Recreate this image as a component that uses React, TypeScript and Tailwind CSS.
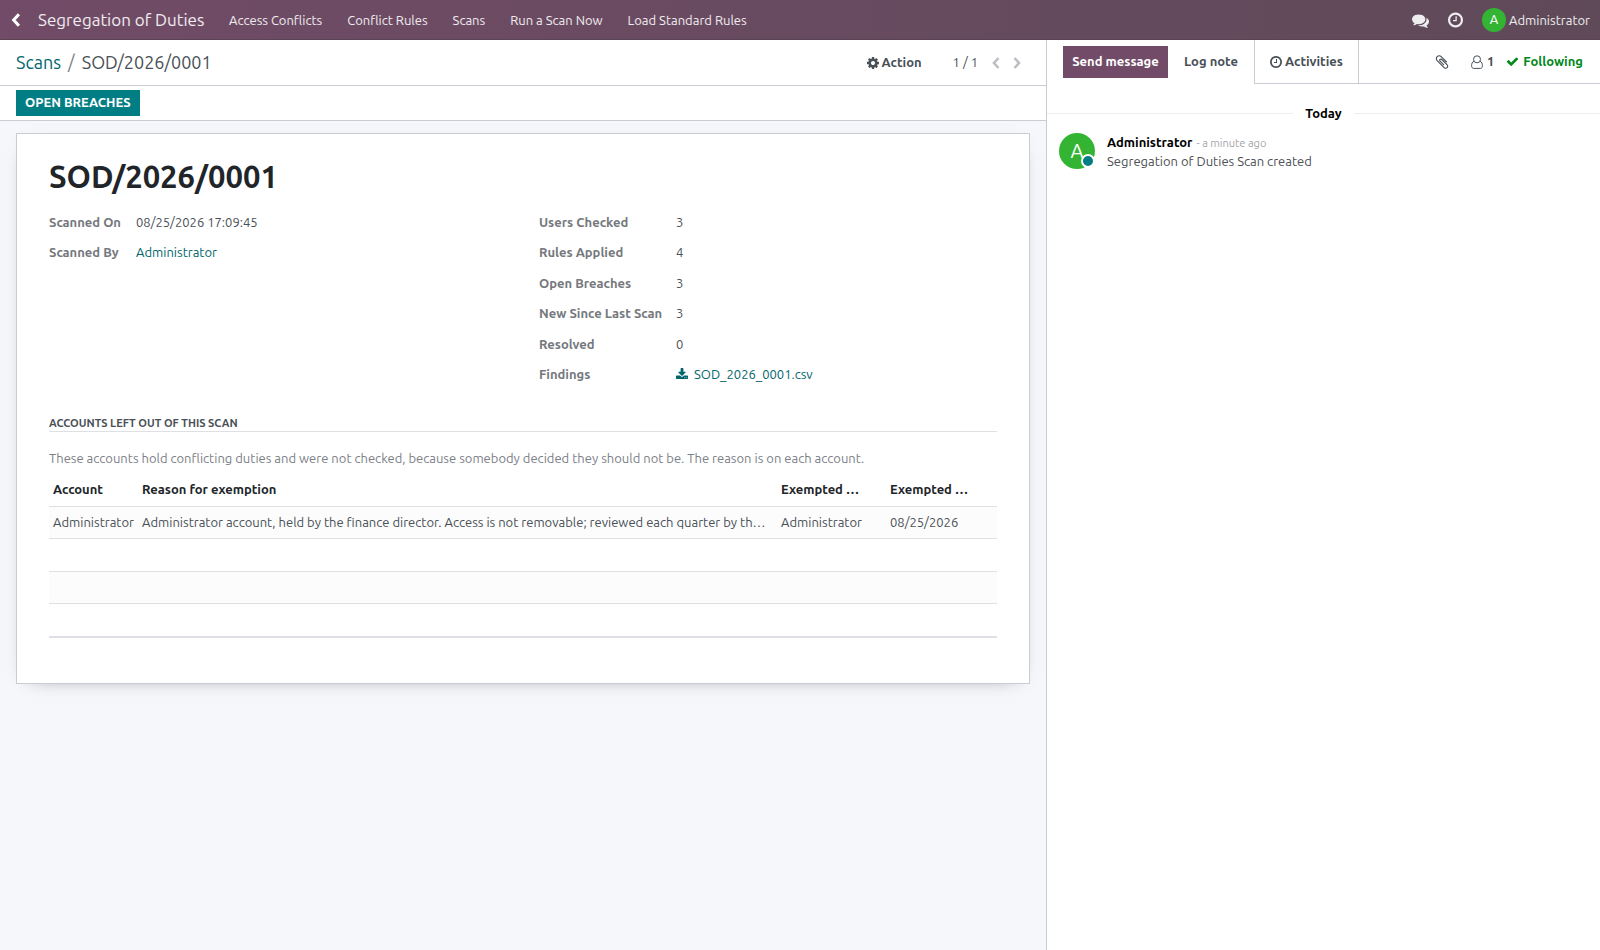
import React from "react";

const FONT = "font-['Ubuntu','Noto_Sans','Open_Sans',sans-serif]";

type IconProps = { d: string; box?: string; className?: string };

function Icon({ d, box = "0 0 1792 1792", className = "" }: IconProps) {
  return (
    <svg viewBox={box} className={`shrink-0 ${className}`} fill="currentColor" aria-hidden="true">
      <path d={d} />
    </svg>
  );
}

const CLOCK =
  "M896 544v448q0 14-9 23t-23 9h-320q-14 0-23-9t-9-23v-64q0-14 9-23t23-9h224v-352q0-14 9-23t23-9h64q14 0 23 9t9 23zm416 352q0-148-73-273t-198-198-273-73-273 73-198 198-73 273 73 273 198 198 273 73 273-73 198-198 73-273zm224 0q0 209-103 385.5t-279.5 279.5-385.5 103-385.5-103-279.5-279.5-103-385.5 103-385.5 279.5-279.5 385.5-103 385.5 103 279.5 279.5 103 385.5z";
const COG =
  "M1024 896q0-106-75-181t-181-75-181 75-75 181 75 181 181 75 181-75 75-181zm512-109v222q0 12-8 23t-20 13l-185 28q-19 54-39 91 35 50 107 138 10 12 10 25t-9 23q-27 37-99 108t-94 71q-12 0-26-9l-138-108q-44 23-91 38-16 136-29 186-7 28-36 28h-222q-14 0-24.5-8.5t-11.5-21.5l-28-184q-49-16-90-37l-141 107q-10 9-25 9-14 0-25-11-126-114-165-168-7-10-7-23 0-12 8-23 15-21 51-66.5t54-70.5q-27-50-41-99l-183-27q-13-2-21-12.5t-8-23.5v-222q0-12 8-23t19-13l186-28q14-46 39-92-40-57-107-138-10-12-10-24 0-10 9-23 26-36 98.5-107.5t94.5-71.5q13 0 26 10l138 107q44-23 91-38 16-136 29-186 7-28 36-28h222q14 0 24.5 8.5t11.5 21.5l28 184q49 16 90 37l142-107q9-9 24-9 13 0 25 10 129 119 165 170 7 8 7 22 0 12-8 23-15 21-51 66.5t-54 70.5q26 50 41 98l183 28q13 2 21 12.5t8 23.5z";
const DOWNLOAD =
  "M1280 1344q0-26-19-45t-45-19-45 19-19 45 19 45 45 19 45-19 19-45zm256 0q0-26-19-45t-45-19-45 19-19 45 19 45 45 19 45-19 19-45zm128-224v320q0 40-28 68t-68 28h-1472q-40 0-68-28t-28-68v-320q0-40 28-68t68-28h465l135 136q58 56 136 56t136-56l136-136h464q40 0 68 28t28 68zm-325-569q17 41-14 70l-448 448q-18 19-45 19t-45-19l-448-448q-31-29-14-70 17-39 59-39h256v-448q0-26 19-45t45-19h256q26 0 45 19t19 45v448h256q42 0 59 39z";
const CHECK =
  "M1671 566q0 40-28 68l-724 724-136 136q-28 28-68 28t-68-28l-136-136-362-362q-28-28-28-68t28-68l136-136q28-28 68-28t68 28l294 295 656-657q28-28 68-28t68 28l136 136q28 28 28 68z";
const CLIP =
  "M1596 1385q0 117-79 196t-196 79q-135 0-235-100l-777-776q-113-115-113-271 0-159 110-270t269-111q158 0 273 113l605 606q10 10 10 22 0 16-30.5 46.5t-46.5 30.5q-13 0-23-10l-606-607q-79-77-181-77-106 0-179 75t-73 181q0 105 76 181l776 777q63 63 145 63 64 0 106-42t42-106q0-82-63-145l-581-581q-26-24-60-24-29 0-48 19t-19 48q0 32 25 59l410 410q10 10 10 22 0 16-31 47t-47 31q-12 0-22-10l-410-410q-63-61-63-149 0-82 57-139t139-57q88 0 149 63l581 581q100 98 100 235z";
const COMMENTS =
  "M1408 768q0 139-94 257t-256.5 186.5-353.5 68.5q-86 0-176-16-124 88-278 128-36 9-86 16h-3q-11 0-20.5-8t-11.5-21q-1-3-1-6.5t.5-6.5 2-6l2.5-5 3.5-5.5 4-5 4.5-5 4-4.5q5-6 23-25t26-29.5 22.5-29 25-38.5 20.5-44q-124-72-195-177t-71-224q0-139 94-257t256.5-186.5 353.5-68.5 353.5 68.5 256.5 186.5 94 257zm384 256q0 120-71 224.5t-195 176.5q10 24 20.5 44t25 38.5 22.5 29 26 29.5 23 25q1 1 4 4.5t4.5 5 4 5 3.5 5.5l2.5 5 2 6 .5 6.5-1 6.5q-3 14-13 22t-22 7q-50-7-86-16-154-40-278-128-90 16-176 16-271 0-472-132 58 4 88 4 161 0 309-45t264-129q125-92 192-212t67-254q0-77-23-152 129 71 204 178t75 230z";

function Chevron({ points, className }: { points: string; className: string }) {
  return (
    <svg viewBox="0 0 8 12" className={`shrink-0 ${className}`} fill="none" stroke="currentColor" strokeWidth="2.6" aria-hidden="true">
      <polyline points={points} />
    </svg>
  );
}

function UserOutline() {
  return (
    <svg viewBox="0 0 12 14" className="h-3.5 w-3 shrink-0" fill="none" stroke="currentColor" strokeWidth="1" aria-hidden="true">
      <circle cx="6" cy="4.3" r="3.5" />
      <path d="M3 6.300C1.200 6.900.6 8.600.6 10.800c0 1.500.8 2.600 2 2.600h6.800c1.200 0 2-1.100 2-2.600 0-2.200-.6-3.900-2.400-4.500" />
    </svg>
  );
}

const menu = ["Access Conflicts", "Conflict Rules", "Scans", "Run a Scan Now", "Load Standard Rules"];

function NavBar() {
  return (
    <header className="flex h-10 items-center bg-linear-to-r from-[#714b67] to-[#5f4a59] text-[13px] text-white/90 inset-shadow-[0_-1px_0_#5a4352]">
      <button type="button" aria-label="Back" className="flex h-full w-[38px] items-center pl-[11px] text-white">
        <Chevron points="6.500,1 2,6 6.500,11" className="h-3.5 w-2.5" />
      </button>
      <a href="#home" className="w-[179px] text-[17px]">Segregation of Duties</a>
      <nav className="flex h-full items-center gap-px pt-0.5">
        {menu.map((m) => (
          <a key={m} href="#menu" className="px-3">{m}</a>
        ))}
      </nav>
      <div className="ml-auto flex items-center pr-2.5">
        <button type="button" aria-label="Messages" className="mr-[19px]"><Icon d={COMMENTS} className="size-[17px]" /></button>
        <button type="button" aria-label="Activities" className="mr-[19px]"><Icon d={CLOCK} box="0 0 1536 1792" className="h-[18px] w-[15px]" /></button>
        <button type="button" className="flex items-center gap-[3px]">
          <span className="flex size-6 items-center justify-center rounded-full bg-[#33b533] text-[13px] text-white">A</span>
          <span className="pt-0.5">Administrator</span>
        </button>
      </div>
    </header>
  );
}

function ControlPanel() {
  return (
    <div className="flex h-[46px] items-center border-b border-[#c9ccd2] pl-4 pr-[19px]">
      <div className="flex gap-[7px] text-[18px]">
        <a href="#scans" className="text-[#01666b]">Scans</a>
        <span className="text-[#777d85]">/</span>
        <span>SOD/2026/0001</span>
      </div>
      <button type="button" className="ml-auto flex items-center gap-[3px] font-semibold">
        <Icon d={COG} box="0 0 1536 1792" className="h-3.5 w-3" />
        Action
      </button>
      <span className="ml-[31px] mr-[7px]">1 / 1</span>
      <button type="button" aria-label="Previous" className="flex w-[21px] justify-center text-[#bcbec4]">
        <Chevron points="6.500,1 2,6 6.500,11" className="h-3 w-2" />
      </button>
      <button type="button" aria-label="Next" className="flex w-[21px] justify-center text-[#bcbec4]">
        <Chevron points="1.500,1 6,6 1.500,11" className="h-3 w-2" />
      </button>
    </div>
  );
}

const counts = [
  ["Users Checked", "3"],
  ["Rules Applied", "4"],
  ["Open Breaches", "3"],
  ["New Since Last Scan", "3"],
  ["Resolved", "0"],
];

function Sheet() {
  return (
    <div className="mx-4 mt-3 border border-[#c9ccd2] bg-white px-8 pb-[45px] pt-[19px] shadow-[0_5px_20px_-15px_rgb(0_0_0/0.65)]">
      <h1 className="text-[31px] font-semibold leading-[48px] text-[#212529]">SOD/2026/0001</h1>
      <div className="mt-1.5 grid grid-cols-2 items-start gap-x-8">
        <dl className="grid h-[61px] grid-cols-[87px_1fr] grid-rows-2 items-center">
          <dt className="font-semibold text-[#75787d]">Scanned On</dt>
          <dd>08/25/2026 17:09:45</dd>
          <dt className="font-semibold text-[#75787d]">Scanned By</dt>
          <dd><a href="#user" className="text-[#01666b]">Administrator</a></dd>
        </dl>
        <dl className="grid h-[183px] grid-cols-[137px_1fr] grid-rows-6 items-center">
          {counts.map(([k, v]) => (
            <React.Fragment key={k}>
              <dt className="font-semibold text-[#75787d]">{k}</dt>
              <dd>{v}</dd>
            </React.Fragment>
          ))}
          <dt className="font-semibold text-[#75787d]">Findings</dt>
          <dd>
            <a href="#file" className="flex items-center gap-1.5 text-[#01666b]">
              <Icon d={DOWNLOAD} box="0 0 1664 1792" className="h-[13px] w-3" />
              SOD_2026_0001.csv
            </a>
          </dd>
        </dl>
      </div>
      <h2 className="mt-[25px] border-b border-[#dee0e4] text-[11px] font-bold uppercase leading-[16px]">Accounts left out of this scan</h2>
      <p className="mt-4 leading-5 text-[#7c8087]">
        These accounts hold conflicting duties and were not checked, because somebody decided they should not be. The reason is on each account.
      </p>
      <table className="w-full table-fixed border-collapse border-b-2 border-[#dee0e6] text-left">
        <colgroup>
          <col className="w-[89px]" />
          <col />
          <col className="w-[109px]" />
          <col className="w-[111px]" />
        </colgroup>
        <thead>
          <tr className="h-[38px] border-b border-[#dee0e4] text-[#212529]">
            <th className="truncate pl-1 pt-1.5 font-semibold">Account</th>
            <th className="truncate pl-1 pt-1.5 font-semibold">Reason for exemption</th>
            <th className="truncate pl-1 pt-1.5 font-semibold">Exempted …</th>
            <th className="truncate pl-1 pt-1.5 font-semibold">Exempted …</th>
          </tr>
        </thead>
        <tbody>
          <tr className="h-8 border-b border-[#dee0e4] bg-[#fcfcfc]">
            <td className="whitespace-nowrap pl-1 pt-px">Administrator</td>
            <td className="truncate pl-1 pt-px">Administrator account, held by the finance director. Access is not removable; reviewed each quarter by th…</td>
            <td className="truncate pl-1 pt-px">Administrator</td>
            <td className="truncate pl-1 pt-px">08/25/2026</td>
          </tr>
          <tr className="h-[33px] border-b border-[#dee0e4]"><td colSpan={4} /></tr>
          <tr className="h-8 border-b border-[#dee0e4] bg-[#fcfcfc]"><td colSpan={4} /></tr>
          <tr className="h-[34px]"><td colSpan={4} /></tr>
        </tbody>
      </table>
    </div>
  );
}

function Chatter() {
  return (
    <aside className="w-[554px] shrink-0 border-l border-[#c9ccd2] bg-white">
      <div className="flex h-[44px]">
        <div className="flex flex-1 pl-4 pt-1.5">
          <button type="button" className="h-8 w-[105px] bg-[#714b67] font-semibold text-white">Send message</button>
          <button type="button" className="h-8 flex-1 font-semibold">Log note</button>
        </div>
        <div className="flex w-[346px] border-b border-l border-[#c9ccd2]">
          <button type="button" className="flex w-[104px] items-center justify-center gap-[3px] border-r border-[#c9ccd2] font-semibold">
            <Icon d={CLOCK} box="0 0 1536 1792" className="h-3.5 w-3" />
            Activities
          </button>
          <div className="ml-auto flex items-center pr-[17px]">
            <button type="button" aria-label="Attachments" className="mr-[21px]"><Icon d={CLIP} className="size-4" /></button>
            <button type="button" className="mr-3 flex items-center gap-1 font-semibold"><UserOutline />1</button>
            <button type="button" className="flex items-center gap-1 font-semibold text-[#008818]">
              <Icon d={CHECK} className="size-[13px]" />
              Following
            </button>
          </div>
        </div>
      </div>
      <div className="mt-[19px] flex items-center gap-3 font-bold leading-5 text-black">
        <span className="h-px flex-1 bg-[#eceef0]" />
        Today
        <span className="h-px flex-1 bg-[#eceef0]" />
      </div>
      <article className="mt-2.5 flex gap-3 pl-3">
        <div className="relative flex size-9 items-center justify-center rounded-full bg-[#33b533] text-xl text-white">
          A
          <span className="absolute bottom-px right-0 size-3.5 rounded-full border-2 border-white bg-[#017e84]" />
        </div>
        <div className="leading-[19px]">
          <div className="flex items-baseline gap-1">
            <strong className="text-black">Administrator</strong>
            <span className="text-[11px] text-[#a3a6ab]">- a minute ago</span>
          </div>
          <p className="leading-[17px] text-[#4c4f55]">Segregation of Duties Scan created</p>
        </div>
      </article>
    </aside>
  );
}

export default function App() {
  return (
    <div className={`flex min-h-screen flex-col bg-[#f5f7fb] text-[13px] text-[#495057] ${FONT}`}>
      <NavBar />
      <div className="flex flex-1">
        <main className="min-w-0 flex-1">
          <div className="bg-white">
            <ControlPanel />
            <div className="flex h-[35px] items-center border-b border-[#c9ccd2] px-4">
              <button type="button" className="h-[26px] bg-[#017e84] px-[9px] font-semibold uppercase text-white">Open Breaches</button>
            </div>
          </div>
          <Sheet />
        </main>
        <Chatter />
      </div>
    </div>
  );
}
